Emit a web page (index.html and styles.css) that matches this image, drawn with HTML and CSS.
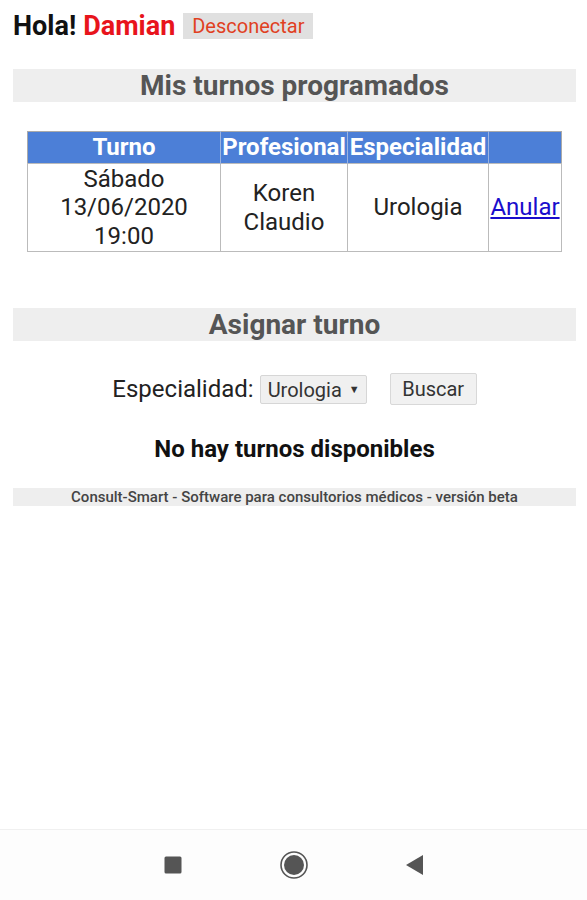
FILE: index.html
```html
<!DOCTYPE html>
<html lang="es">
<head>
    <meta charset="UTF-8">
    <meta name="viewport" content="width=device-width, initial-scale=1.0">
    <title>Consult-Smart</title>
    <link rel="stylesheet" href="styles.css">
</head>
<body>
    <div class="page">
        <div class="saludo">
            Hola! <span class="usuario">Damian</span>
            <button class="desconectar">Desconectar</button>
        </div>

        <h2 class="barra">Mis turnos programados</h2>

        <table class="turnos">
            <thead>
                <tr>
                    <th class="c-turno">Turno</th>
                    <th class="c-prof">Profesional</th>
                    <th class="c-esp">Especialidad</th>
                    <th class="c-acc"></th>
                </tr>
            </thead>
            <tbody>
                <tr>
                    <td>Sábado<br>13/06/2020<br>19:00</td>
                    <td>Koren<br>Claudio</td>
                    <td>Urologia</td>
                    <td class="accion"><a href="#">Anular</a></td>
                </tr>
            </tbody>
        </table>

        <h2 class="barra barra-asignar">Asignar turno</h2>

        <form class="buscar">
            <label for="especialidad">Especialidad:</label>
            <div class="selector" id="especialidad">Urologia <span class="flecha">&#9660;</span></div>
            <button type="submit" class="btn-buscar">Buscar</button>
        </form>

        <p class="vacio">No hay turnos disponibles</p>

        <div class="pie">Consult-Smart - Software para consultorios médicos - versión beta</div>
    </div>

    <nav class="navbar">
        <span class="nav-item">
            <svg width="18" height="18" viewBox="0 0 18 18"><rect x="0.5" y="0.5" width="17" height="17" rx="1.5" fill="#555"/></svg>
        </span>
        <span class="nav-item">
            <svg width="30" height="30" viewBox="0 0 30 30"><circle cx="15" cy="15" r="13" fill="none" stroke="#555" stroke-width="1.6"/><circle cx="15" cy="15" r="10" fill="#555"/></svg>
        </span>
        <span class="nav-item">
            <svg width="18" height="20" viewBox="0 0 18 20"><polygon points="17,0 17,20 0,10" fill="#555"/></svg>
        </span>
    </nav>
</body>
</html>
```

FILE: styles.css
```css
body {
    margin: 0;
    font-family: Roboto, "Liberation Sans", sans-serif;
    color: #111;
    background-color: #fff;
    height: 900px;
    display: flex;
    flex-direction: column;
}

.page {
    flex: 1;
    padding: 11px 11px 0 13px;
}

.saludo {
    font-size: 27px;
    font-weight: bold;
    line-height: 30px;
    display: flex;
    align-items: center;
    gap: 7px;
}

.usuario {
    color: #e8141c;
}

.desconectar {
    margin-left: 1px;
    height: 26px;
    width: 130px;
    padding: 0;
    border: none;
    background-color: #e0e0e0;
    color: #e0401f;
    font-family: Roboto, "Liberation Sans", sans-serif;
    font-size: 20px;
    line-height: 26px;
}

.barra {
    margin: 28px 0 0 0;
    height: 33px;
    line-height: 33px;
    background-color: #eeeeee;
    color: #555;
    font-size: 28px;
    font-weight: bold;
    text-align: center;
}

.turnos {
    margin: 29px auto 0 auto;
    width: 535px;
    table-layout: fixed;
    border-collapse: collapse;
    font-size: 24px;
    border: 1px solid #aaa;
}

.turnos th {
    background-color: #4c7fd7;
    color: #fff;
    font-weight: bold;
    height: 31px;
    padding: 0;
    line-height: 31px;
    white-space: nowrap;
    border-left: 1px solid #9bb3e0;
}

.turnos th:first-child {
    border-left: none;
}

.c-turno { width: 192px; }
.c-prof { width: 126px; }
.c-esp { width: 140px; }

.turnos td {
    text-align: center;
    height: 87px;
    padding: 0;
    line-height: 28.5px;
    border: 1px solid #bbb;
    color: #222;
}

.accion a {
    color: #1a0dcc;
}

.barra-asignar {
    margin-top: 56px;
}

.buscar {
    margin: 32px 0 0 0;
    display: flex;
    justify-content: center;
    align-items: center;
    font-size: 24px;
    color: #222;
}

.selector {
    margin-left: 6px;
    height: 29px;
    width: 107px;
    box-sizing: border-box;
    padding-left: 7px;
    line-height: 28px;
    font-size: 20px;
    background-color: #f0f0f0;
    border: 1px solid #d6d6d6;
    border-radius: 2px;
    color: #333;
}

.flecha {
    font-size: 11px;
    vertical-align: 4px;
    margin-left: 2px;
}

.btn-buscar {
    margin-left: 23px;
    height: 32px;
    width: 87px;
    font-family: Roboto, "Liberation Sans", sans-serif;
    font-size: 20px;
    color: #333;
    background-color: #f1f1f1;
    border: 1px solid #d8d8d8;
    border-radius: 2px;
}

.vacio {
    margin: 30px 0 0 0;
    text-align: center;
    font-size: 24px;
    font-weight: bold;
    color: #111;
}

.pie {
    margin-top: 25px;
    height: 18px;
    line-height: 18px;
    background-color: #eeeeee;
    color: #444;
    font-size: 15px;
    font-weight: 500;
    text-align: center;
    white-space: nowrap;
}

.navbar {
    height: 70px;
    border-top: 1px solid #f0f0f0;
    background-color: #fdfdfd;
    display: flex;
    justify-content: center;
    align-items: center;
}

.nav-item {
    width: 121px;
    display: flex;
    justify-content: center;
}
```
